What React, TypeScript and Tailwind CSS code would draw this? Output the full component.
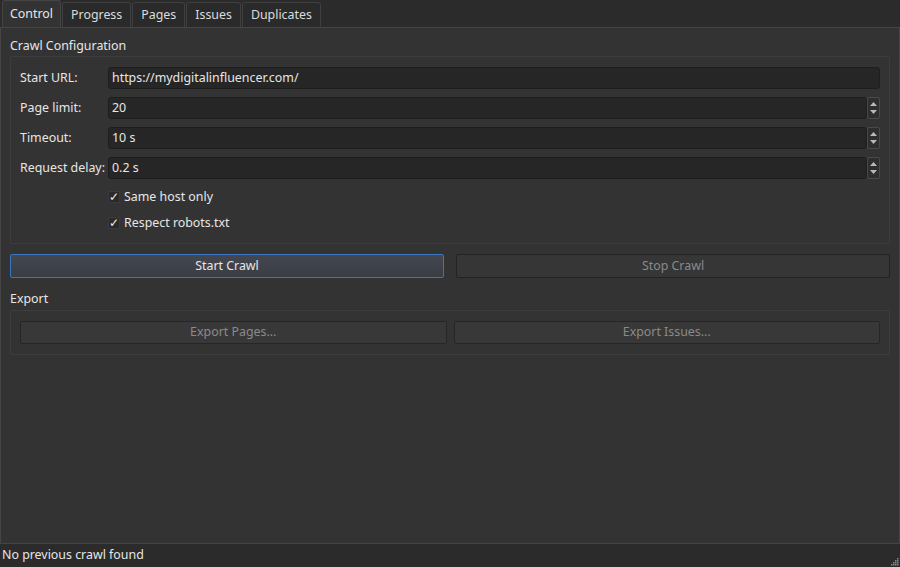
import React from "react";

const Spin = () => (
  <div className="flex flex-col w-[13px] h-[22px] border border-[#4a4a4a] rounded-[2px] bg-[#2e2e2e] items-center justify-around py-[2px]">
    <svg width="7" height="4" viewBox="0 0 7 4"><path d="M0 4 L3.5 0 L7 4Z" fill="#b8b8b8" /></svg>
    <svg width="7" height="4" viewBox="0 0 7 4"><path d="M0 0 L3.5 4 L7 0Z" fill="#b8b8b8" /></svg>
  </div>
);

const Row = ({ label, value, spin }: { label: string; value: string; spin?: boolean }) => (
  <div className="flex items-center h-[22px]">
    <div className="w-[88px] shrink-0">{label}</div>
    <div className="flex-1 h-[22px] bg-[#262626] border border-[#1e1e1e] rounded-[3px] px-[3px] flex items-center">{value}</div>
    {spin && <Spin />}
  </div>
);

const Check = ({ label }: { label: string }) => (
  <div className="flex items-center h-[18px] pl-[88px] gap-[4px]">
    <div className="w-[12px] h-[12px] bg-[#2a2a2a] border border-[#3a3a3a] flex items-center justify-center text-[12px] leading-none">✓</div>
    <span>{label}</span>
  </div>
);

export default function App() {
  const tabs = ["Progress", "Pages", "Issues", "Duplicates"];
  return (
    <div className="w-[900px] h-[567px] bg-[#2b2b2b] text-[#e6e6e6] text-[12.4px] flex flex-col overflow-hidden" style={{ fontFamily: '"Noto Sans", "Open Sans", sans-serif' }}>
      <div className="flex h-[27px] pl-[2px] items-end">
        <div className="h-[27px] px-[7px] flex items-center bg-[#333333] border border-b-0 border-[#444] rounded-t-[3px]">Control</div>
        {tabs.map((t) => (
          <div key={t} className="h-[25px] px-[8px] flex items-center bg-[#2a2a2a] border border-b-0 border-[#3f3f3f] rounded-t-[3px] ml-[1px] text-[#dcdcdc]">{t}</div>
        ))}
      </div>
      <div className="flex-1 bg-[#333333] border border-[#444] flex flex-col px-[9px] pt-[9px]">
        <div className="h-[17px] leading-[17px]">Crawl Configuration</div>
        <div className="mt-[2px] border border-[#3d3d3d] rounded-[2px] px-[9px] pt-[10px] pb-[11px] flex flex-col gap-[8px]">
          <Row label="Start URL:" value="https://mydigitalinfluencer.com/" />
          <Row label="Page limit:" value="20" spin />
          <Row label="Timeout:" value="10 s" spin />
          <Row label="Request delay:" value="0.2 s" spin />
          <div className="flex flex-col gap-[8px] pt-[1px]">
            <Check label="Same host only" />
            <Check label="Respect robots.txt" />
          </div>
        </div>
        <div className="flex gap-[12px] mt-[10px]">
          <div className="flex-1 h-[24px] flex items-center justify-center rounded-[2px] border border-[#3a76c0] bg-gradient-to-b from-[#434750] to-[#3a3d43]">Start Crawl</div>
          <div className="flex-1 h-[24px] flex items-center justify-center rounded-[2px] border border-[#232323] bg-[#363636] text-[#8a8a8a]">Stop Crawl</div>
        </div>
        <div className="h-[17px] leading-[17px] mt-[12px]">Export</div>
        <div className="mt-[3px] border border-[#3d3d3d] rounded-[2px] px-[9px] py-[10px] flex gap-[7px]">
          <div className="flex-1 h-[23px] flex items-center justify-center rounded-[2px] border border-[#262626] bg-[#383838] text-[#8a8a8a]">Export Pages...</div>
          <div className="flex-1 h-[23px] flex items-center justify-center rounded-[2px] border border-[#262626] bg-[#383838] text-[#8a8a8a]">Export Issues...</div>
        </div>
      </div>
      <div className="h-[23px] flex items-center pl-[2px] relative">
        No previous crawl found
        <svg className="absolute right-[1px] bottom-[1px]" width="10" height="10" viewBox="0 0 10 10">
          {[[8,2],[6,4],[8,4],[4,6],[6,6],[8,6],[2,8],[4,8],[6,8],[8,8]].map(([x,y],i)=>(<rect key={i} x={x} y={y} width="1.5" height="1.5" fill="#888" />))}
        </svg>
      </div>
    </div>
  );
}
